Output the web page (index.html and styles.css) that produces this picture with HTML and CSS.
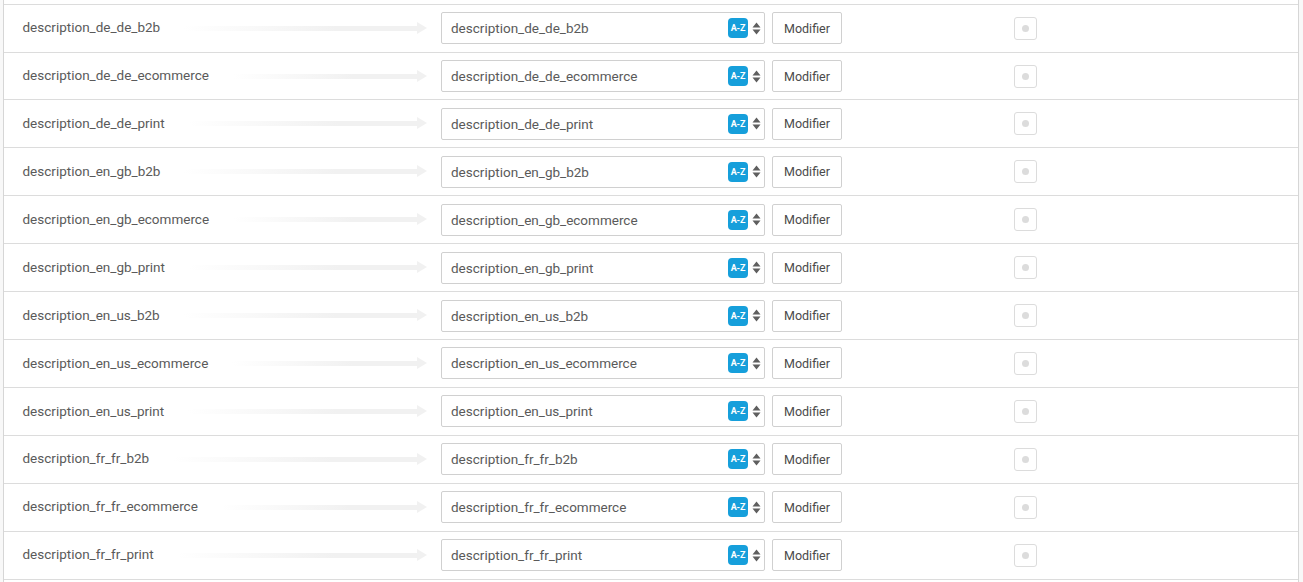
FILE: index.html
```html
<!DOCTYPE html>
<html lang="fr">
<head>
<meta charset="utf-8">
<title>Mapping</title>
<link rel="stylesheet" href="styles.css">
</head>
<body>
<svg class="defs" width="0" height="0"><defs>
<symbol id="sort" viewBox="0 0 9 13"><path d="M4.5 .5 8.5 5.6H.5zM4.5 12.5 .5 7.4h8z"/></symbol>
</defs></svg>
<main class="list">
<div class="row"><div class="source"><span class="label">description_de_de_b2b</span><span class="arrow"></span></div><div class="select"><span class="value">description_de_de_b2b</span><span class="az">A-Z</span><svg class="sort"><use href="#sort"/></svg></div><button class="btn">Modifier</button><span class="check"><span class="dot"></span></span></div>
<div class="row"><div class="source"><span class="label">description_de_de_ecommerce</span><span class="arrow"></span></div><div class="select"><span class="value">description_de_de_ecommerce</span><span class="az">A-Z</span><svg class="sort"><use href="#sort"/></svg></div><button class="btn">Modifier</button><span class="check"><span class="dot"></span></span></div>
<div class="row"><div class="source"><span class="label">description_de_de_print</span><span class="arrow"></span></div><div class="select"><span class="value">description_de_de_print</span><span class="az">A-Z</span><svg class="sort"><use href="#sort"/></svg></div><button class="btn">Modifier</button><span class="check"><span class="dot"></span></span></div>
<div class="row"><div class="source"><span class="label">description_en_gb_b2b</span><span class="arrow"></span></div><div class="select"><span class="value">description_en_gb_b2b</span><span class="az">A-Z</span><svg class="sort"><use href="#sort"/></svg></div><button class="btn">Modifier</button><span class="check"><span class="dot"></span></span></div>
<div class="row"><div class="source"><span class="label">description_en_gb_ecommerce</span><span class="arrow"></span></div><div class="select"><span class="value">description_en_gb_ecommerce</span><span class="az">A-Z</span><svg class="sort"><use href="#sort"/></svg></div><button class="btn">Modifier</button><span class="check"><span class="dot"></span></span></div>
<div class="row"><div class="source"><span class="label">description_en_gb_print</span><span class="arrow"></span></div><div class="select"><span class="value">description_en_gb_print</span><span class="az">A-Z</span><svg class="sort"><use href="#sort"/></svg></div><button class="btn">Modifier</button><span class="check"><span class="dot"></span></span></div>
<div class="row"><div class="source"><span class="label">description_en_us_b2b</span><span class="arrow"></span></div><div class="select"><span class="value">description_en_us_b2b</span><span class="az">A-Z</span><svg class="sort"><use href="#sort"/></svg></div><button class="btn">Modifier</button><span class="check"><span class="dot"></span></span></div>
<div class="row"><div class="source"><span class="label">description_en_us_ecommerce</span><span class="arrow"></span></div><div class="select"><span class="value">description_en_us_ecommerce</span><span class="az">A-Z</span><svg class="sort"><use href="#sort"/></svg></div><button class="btn">Modifier</button><span class="check"><span class="dot"></span></span></div>
<div class="row"><div class="source"><span class="label">description_en_us_print</span><span class="arrow"></span></div><div class="select"><span class="value">description_en_us_print</span><span class="az">A-Z</span><svg class="sort"><use href="#sort"/></svg></div><button class="btn">Modifier</button><span class="check"><span class="dot"></span></span></div>
<div class="row"><div class="source"><span class="label">description_fr_fr_b2b</span><span class="arrow"></span></div><div class="select"><span class="value">description_fr_fr_b2b</span><span class="az">A-Z</span><svg class="sort"><use href="#sort"/></svg></div><button class="btn">Modifier</button><span class="check"><span class="dot"></span></span></div>
<div class="row"><div class="source"><span class="label">description_fr_fr_ecommerce</span><span class="arrow"></span></div><div class="select"><span class="value">description_fr_fr_ecommerce</span><span class="az">A-Z</span><svg class="sort"><use href="#sort"/></svg></div><button class="btn">Modifier</button><span class="check"><span class="dot"></span></span></div>
<div class="row"><div class="source"><span class="label">description_fr_fr_print</span><span class="arrow"></span></div><div class="select"><span class="value">description_fr_fr_print</span><span class="az">A-Z</span><svg class="sort"><use href="#sort"/></svg></div><button class="btn">Modifier</button><span class="check"><span class="dot"></span></span></div>
<div class="row"></div>
</main>
</body>
</html>
```
FILE: styles.css
```css
* { box-sizing: border-box; }
html, body { margin: 0; height: 582px; overflow: hidden; background: #f8f8f8; }
body { font-family: Roboto, "Liberation Sans", sans-serif; font-size: 13.5px; color: #5a5a5a; }
.defs { position: absolute; }
.list {
  margin-left: 3px;
  width: 1296px;
  height: 582px;
  padding-top: 3.65px;
  background: #fff;
  border-left: 1px solid #d6d6d6;
  border-right: 1px solid #d6d6d6;
  overflow: hidden;
}
.row {
  display: flex;
  align-items: center;
  height: 47.92px;
  border-top: 1px solid #dcdcdc;
}
.source {
  display: flex;
  align-items: center;
  width: 422px;
  padding-left: 18.5px;
}
.label { margin-top: -1.7px; white-space: nowrap; }
.arrow {
  position: relative;
  flex: 1;
  height: 5px;
  margin-left: 24px;
  margin-right: 8px;
  background: linear-gradient(to right, rgba(241,241,241,0), #f1f1f1 65%);
}
.arrow::after {
  content: "";
  position: absolute;
  right: -9px;
  top: -4px;
  border-left: 10px solid #f1f1f1;
  border-top: 6.5px solid transparent;
  border-bottom: 6.5px solid transparent;
}
.select {
  display: flex;
  align-items: center;
  width: 324px;
  height: 32px;
  margin-left: 15px;
  padding: 0 3px 0 9px;
  background: #fff;
  border: 1px solid #d0d0d0;
  border-radius: 2px;
}
.value { flex: 1; white-space: nowrap; }
.az {
  width: 20px;
  height: 20px;
  margin-right: 0;
  border-radius: 4px;
  background: #169fdb;
  color: #fff;
  font-size: 9px;
  font-weight: 700;
  letter-spacing: -0.2px;
  line-height: 20px;
  text-align: center;
}
.sort { width: 9px; height: 13px; margin-left: 3.5px; margin-right: 0.5px; fill: #5f5f5f; }
.btn {
  width: 70px;
  height: 32px;
  margin-left: 7px;
  padding: 0;
  background: #fff;
  border: 1px solid #d0d0d0;
  border-radius: 2px;
  color: #4a4a4a;
  font: 12.5px Roboto, "Liberation Sans", sans-serif;
}
.check {
  display: flex;
  align-items: center;
  justify-content: center;
  width: 23px;
  height: 23px;
  margin-left: 172px;
  border: 1px solid #dcdcdc;
  border-radius: 3px;
}
.dot { width: 7px; height: 7px; border-radius: 50%; background: #dcdcdc; }
```
